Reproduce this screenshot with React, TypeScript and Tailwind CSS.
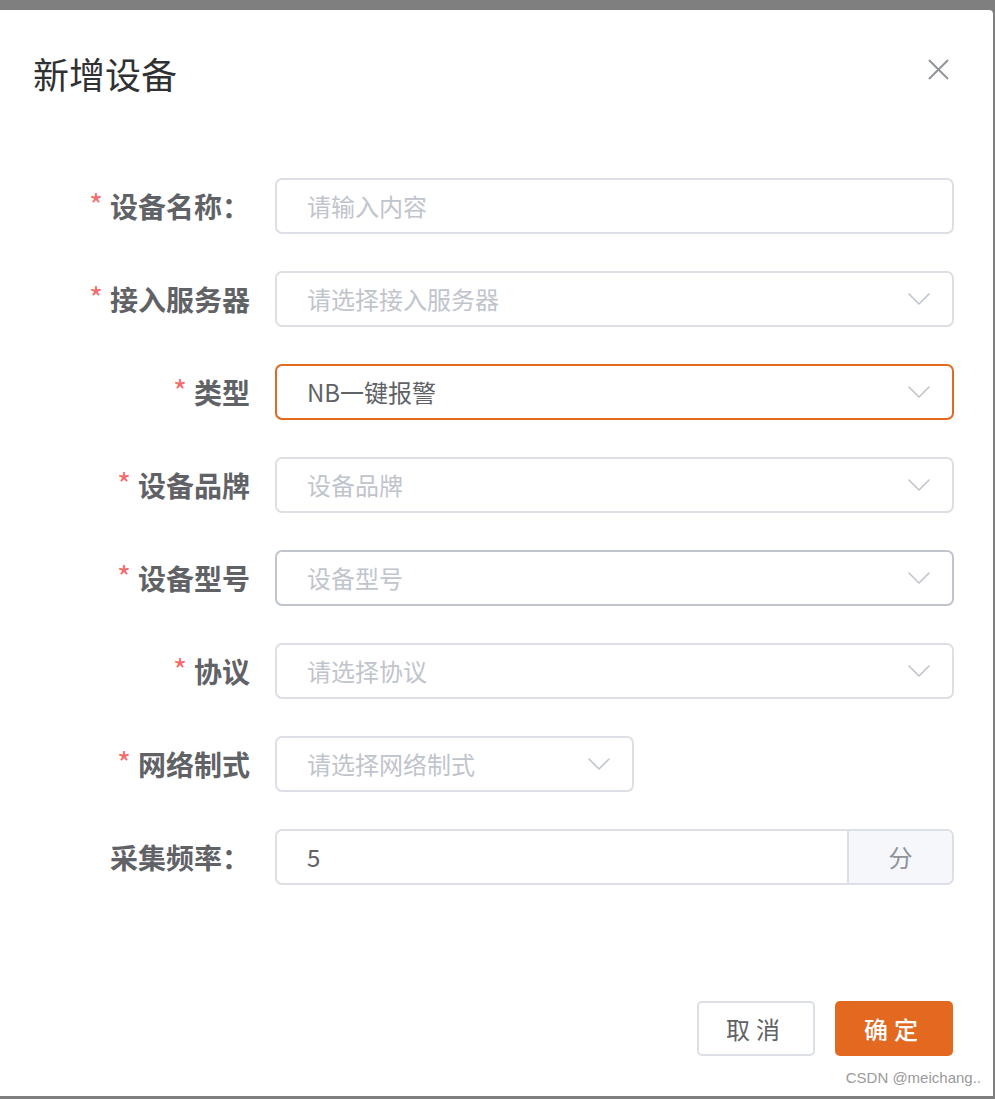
import React from 'react';

const CN = { fontFamily: '"Noto Sans CJK SC", "Noto Sans", sans-serif' };

type Field = {
  label: string;
  required?: boolean;
  colon?: boolean;
  placeholder?: string;
  value?: string;
  kind: 'input' | 'select' | 'append';
  state?: 'focus' | 'hover';
  narrow?: boolean;
};

const fields: Field[] = [
  { label: '设备名称', required: true, colon: true, placeholder: '请输入内容', kind: 'input' },
  { label: '接入服务器', required: true, placeholder: '请选择接入服务器', kind: 'select' },
  { label: '类型', required: true, value: 'NB一键报警', kind: 'select', state: 'focus' },
  { label: '设备品牌', required: true, placeholder: '设备品牌', kind: 'select' },
  { label: '设备型号', required: true, placeholder: '设备型号', kind: 'select', state: 'hover' },
  { label: '协议', required: true, placeholder: '请选择协议', kind: 'select' },
  { label: '网络制式', required: true, placeholder: '请选择网络制式', kind: 'select', narrow: true },
  { label: '采集频率', colon: true, value: '5', kind: 'append' },
];

function Chevron() {
  return (
    <svg width="22" height="12" viewBox="0 0 22 12" fill="none" className="shrink-0">
      <path d="M1 1l10 10L21 1" stroke="#c0c4cc" strokeWidth="1.6" strokeLinecap="round" strokeLinejoin="round" />
    </svg>
  );
}

function Control({ f }: { f: Field }) {
  const border =
    f.state === 'focus' ? 'border-[#e2691f]' : f.state === 'hover' ? 'border-[#c0c4cc]' : 'border-[#dcdfe6]';
  const text = f.value ? (
    <span className="text-[24px] text-[#606266]">{f.value}</span>
  ) : (
    <span className="text-[24px] text-[#c0c4cc]">{f.placeholder}</span>
  );

  if (f.kind === 'append') {
    return (
      <div className={`flex h-[56px] w-[679px] overflow-hidden rounded-[7px] border-2 ${border}`}>
        <div className="flex flex-1 items-center pl-[30px]">{text}</div>
        <div className="flex w-[105px] items-center justify-center border-l-2 border-[#dcdfe6] bg-[#f5f7fa] text-[24px] text-[#909399]">
          分
        </div>
      </div>
    );
  }

  return (
    <div
      className={`flex h-[56px] items-center rounded-[7px] border-2 pl-[30px] pr-[22px] ${border} ${
        f.narrow ? 'w-[359px]' : 'w-[679px]'
      }`}
    >
      <div className="flex-1 leading-none">{text}</div>
      {f.kind === 'select' && <Chevron />}
    </div>
  );
}

export default function App() {
  return (
    <div className="relative h-[1099px] w-[995px] overflow-hidden bg-[#7f7f7f]" style={CN}>
      <div className="mt-[10px] flex h-[1086px] w-[993px] flex-col rounded-tr-[4px] bg-white">
        {/* header */}
        <div className="mt-[43px] flex h-[40px] items-center justify-between pl-[33px] pr-[44px]">
          <h2 className="text-[36px] font-normal leading-none text-[#303133]">新增设备</h2>
          <svg width="21" height="21" viewBox="0 0 22 22" className="mt-[-8px]">
            <path d="M1 1l20 20M21 1L1 21" stroke="#909399" strokeWidth="2" />
          </svg>
        </div>

        {/* form */}
        <div className="mt-[85px] flex flex-col gap-[37px]">
          {fields.map((f) => (
            <div key={f.label} className="flex items-center">
              <div className="flex w-[250px] items-center justify-end">
                {f.required && (
                  <span className="mr-[7px] mt-[-4px] text-[30px] leading-none text-[#f56c6c]">*</span>
                )}
                <span className="text-[28px] font-bold leading-none text-[#606266]">
                  {f.label}
                  {f.colon && '：'}
                </span>
              </div>
              <div className="ml-[25px]">
                <Control f={f} />
              </div>
            </div>
          ))}
        </div>

        {/* footer */}
        <div className="mb-[40px] mt-auto flex justify-end gap-[20px] pr-[40px]">
          <button className="h-[55px] w-[118px] rounded-[5px] border-2 border-[#dcdfe6] bg-white text-[24px] tracking-[6px] text-[#606266]">
            取消
          </button>
          <button className="h-[55px] w-[118px] rounded-[5px] bg-[#e2691f] text-[24px] font-medium tracking-[6px] text-white">
            确定
          </button>
        </div>
        <div
          className="absolute bottom-[10px] right-[14px] text-[15px] text-[#9a9a9a]"
          style={{ fontFamily: '"Liberation Sans", sans-serif' }}
        >
          CSDN @meichang..
        </div>
      </div>
    </div>
  );
}
